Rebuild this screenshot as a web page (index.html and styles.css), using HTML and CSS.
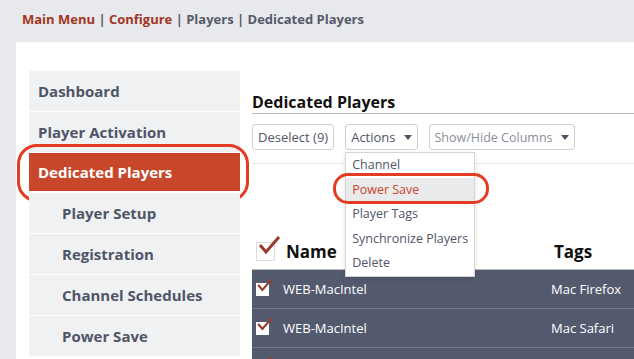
FILE: index.html
```html
<!DOCTYPE html>
<html lang="en">
<head>
  <meta charset="UTF-8" />
  <title>Dedicated Players</title>
  <link rel="stylesheet" href="styles.css">
</head>
<body>
  <div class="crumbs">
    <a class="crumb-link">Main Menu</a> | <a class="crumb-link">Configure</a> | Players | Dedicated Players
  </div>
  <div class="panel">
    <ul class="sidebar">
      <li class="nav-item">Dashboard</li>
      <li class="nav-item">Player Activation</li>
      <li class="nav-item active">Dedicated Players</li>
      <li class="nav-item sub">Player Setup</li>
      <li class="nav-item sub">Registration</li>
      <li class="nav-item sub">Channel Schedules</li>
      <li class="nav-item sub">Power Save</li>
    </ul>
    <div class="main">
      <h2 class="title">Dedicated Players</h2>
      <div class="toolbar">
        <button class="btn">Deselect (9)</button>
        <div class="dropdown">
          <button class="btn">Actions <span class="caret"></span></button>
          <ul class="menu">
            <li>Channel</li>
            <li class="picked">Power Save</li>
            <li>Player Tags</li>
            <li>Synchronize Players</li>
            <li>Delete</li>
          </ul>
        </div>
        <button class="btn light">Show/Hide Columns <span class="caret"></span></button>
      </div>
      <div class="table">
        <div class="row head">
          <span class="box big"><svg viewBox="0 0 24 22"><polyline points="3,11 9,18 22,3" /></svg></span>
          <span class="name">Name</span>
          <span class="tags">Tags</span>
        </div>
        <div class="row">
          <span class="box"><svg viewBox="0 0 24 22"><polyline points="3,11 9,18 22,3" /></svg></span>
          <span class="name">WEB-MacIntel</span>
          <span class="tags">Mac Firefox</span>
        </div>
        <div class="row">
          <span class="box"><svg viewBox="0 0 24 22"><polyline points="3,11 9,18 22,3" /></svg></span>
          <span class="name">WEB-MacIntel</span>
          <span class="tags">Mac Safari</span>
        </div>
        <div class="row">
          <span class="box"><svg viewBox="0 0 24 22"><polyline points="3,11 9,18 22,3" /></svg></span>
        </div>
      </div>
    </div>
  </div>
</body>
</html>
```

FILE: styles.css
```css
body {
  margin: 0;
  font-family: 'Open Sans', sans-serif;
  background-color: #e8e9ec;
  color: #4f5566;
  height: 359px;
  overflow: hidden;
}
.crumbs {
  height: 42px;
  box-sizing: border-box;
  padding: 10px 22px 0;
  font-size: 13px;
  font-weight: bold;
  color: #555b6b;
}
.crumb-link {
  color: #a3361f;
}
.panel {
  margin-left: 16px;
  background-color: #fff;
  display: flex;
  padding: 29px 0 0 13px;
  height: 288px;
  overflow: hidden;
}
.sidebar {
  list-style: none;
  margin: 0;
  padding: 0;
  width: 211px;
  flex-shrink: 0;
}
.nav-item {
  height: 40px;
  line-height: 40px;
  margin-bottom: 1px;
  padding-left: 9px;
  background-color: #f0f1f3;
  font-size: 15px;
  font-weight: bold;
  position: relative;
}
.nav-item.sub {
  padding-left: 33px;
}
.nav-item.active {
  background-color: #c8472a;
  color: #fff;
  height: 38px;
  line-height: 38px;
  margin: 1px 0 2px;
}
.nav-item.active::after {
  content: "";
  position: absolute;
  left: -12px;
  right: -9px;
  top: -9px;
  bottom: -11px;
  border: 3px solid #e23c23;
  border-radius: 20px;
}
.main {
  flex: 1;
  margin-left: 12px;
  padding-top: 21px;
}
.title {
  margin: 0;
  font-size: 16px;
  font-weight: bold;
  color: #111;
  height: 21px;
  line-height: 20px;
  border-bottom: 1px solid #b9b9b9;
}
.toolbar {
  display: flex;
  gap: 11px;
  padding: 10px 0 13px;
  border-bottom: 1px solid #e6e6e6;
}
.btn {
  height: 26px;
  padding: 0 5px;
  font-family: inherit;
  font-size: 13px;
  color: #4f5566;
  background-color: #fff;
  border: 1px solid #cfcfcf;
  border-radius: 3px;
  display: flex;
  align-items: center;
  gap: 8px;
}
.btn.light {
  color: #8a8f9a;
  font-size: 12.5px;
}
.caret {
  width: 0;
  height: 0;
  border-left: 4px solid transparent;
  border-right: 4px solid transparent;
  border-top: 5px solid #4f5566;
}
.dropdown {
  position: relative;
}
.menu {
  position: absolute;
  left: 0;
  top: 28px;
  width: 128px;
  margin: 0;
  padding: 0;
  list-style: none;
  background-color: #fff;
  border: 1px solid #d6d6d6;
  box-shadow: 0 2px 5px rgba(0, 0, 0, 0.12);
  z-index: 5;
  font-size: 12.5px;
  color: #4f5566;
}
.menu li {
  height: 24.5px;
  line-height: 24px;
  padding-left: 6px;
  white-space: nowrap;
}
.menu li.picked {
  background-color: #e9eaec;
  color: #c8472a;
  position: relative;
}
.menu li.picked::after {
  content: "";
  position: absolute;
  left: -13px;
  right: -15px;
  top: -5px;
  bottom: -2px;
  border: 3px solid #e23c23;
  border-radius: 15px;
}
.table {
  margin-top: 69px;
}
.row {
  display: flex;
  align-items: center;
  height: 38px;
  background-color: #545a6e;
  color: #fff;
  font-size: 13px;
  border-bottom: 1px solid #72778a;
}
.row.head {
  background-color: #fff;
  color: #111;
  font-size: 17px;
  font-weight: bold;
  height: 36px;
  border-bottom: 1px solid #bbb;
}
.box {
  width: 13px;
  height: 13px;
  margin: 0 14px 0 4px;
  background-color: #fff;
  position: relative;
  flex-shrink: 0;
}
.box svg {
  position: absolute;
  left: 0;
  top: -6px;
  width: 17px;
  height: 16px;
  fill: none;
  stroke: #9b3a2a;
  stroke-width: 3;
}
.box.big {
  width: 17px;
  height: 17px;
  border: 1px solid #ddd;
  margin: 0 11px 0 4px;
}
.box.big svg {
  left: 0;
  top: -9px;
  width: 24px;
  height: 22px;
}
.name {
  width: 268px;
  flex-shrink: 0;
}
```
